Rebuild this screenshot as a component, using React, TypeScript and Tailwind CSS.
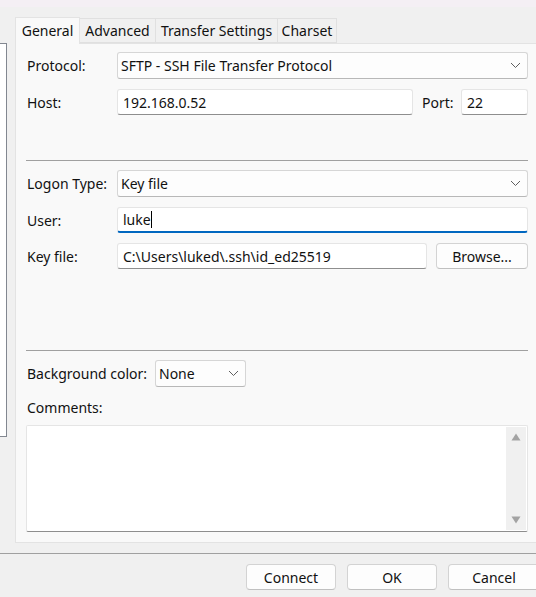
import React from "react";

const Chevron = () => (
  <svg width="11" height="7" viewBox="0 0 11 7" className="shrink-0">
    <path d="M1 1 L5.5 5.5 L10 1" fill="none" stroke="#5f5f5f" strokeWidth="1" />
  </svg>
);

const Select = ({ value, className }: { value: string; className: string }) => (
  <div
    className={`h-[27px] bg-[#fdfdfd] border border-[#d6d6d6] border-b-[#b8b8b8] rounded-[3px] flex items-center pl-[3px] pr-[6px] justify-between ${className}`}
  >
    <span>{value}</span>
    <Chevron />
  </div>
);

const Input = ({ value, className }: { value: string; className: string }) => (
  <div
    className={`h-[26px] bg-white border border-[#e5e5e5] border-b-[#8e8e8e] rounded-[3px] flex items-center pl-[5px] ${className}`}
  >
    <span>{value}</span>
  </div>
);

const Btn = ({ label, className }: { label: string; className: string }) => (
  <div
    className={`h-[26px] bg-[#fdfdfd] border border-[#d3d3d3] border-b-[#c0c0c0] rounded-[4px] flex items-center justify-center ${className}`}
  >
    {label}
  </div>
);

export default function App() {
  return (
    <div
      className="w-[536px] h-[597px] bg-[#f0f0f0] flex flex-col overflow-hidden text-[14px] text-[#111111]"
      style={{ fontFamily: '"Noto Sans", "Open Sans", sans-serif' }}
    >
      <div className="h-[7px] bg-[#f4eff4] shrink-0" />
      <div className="flex h-[546px] shrink-0">
        <div className="w-[7px] mt-[36px] h-[394px] bg-white border border-l-0 border-[#828790] shrink-0" />
        <div className="ml-[8px] mt-[9px] flex-1 flex flex-col min-w-0">
          <div className="flex items-end h-[27px] leading-none">
            <div className="w-[65px] h-[27px] bg-[#f9f9f9] border border-b-0 border-[#e3e3e3] flex items-center justify-center relative top-[1px] z-10">
              General
            </div>
            <div className="w-[76px] h-[25px] bg-[#f0f0f0] border border-l-0 border-[#e0e0e0] flex items-center justify-center">
              Advanced
            </div>
            <div className="w-[122px] h-[25px] bg-[#f0f0f0] border border-l-0 border-[#e0e0e0] flex items-center justify-center">
              Transfer Settings
            </div>
            <div className="w-[59px] h-[25px] bg-[#f0f0f0] border border-l-0 border-[#e0e0e0] flex items-center justify-center">
              Charset
            </div>
          </div>
          <div className="h-[500px] bg-[#f9f9f9] border border-r-0 border-[#e3e3e3] flex flex-col pl-[10px] pr-[8px]">
            {/* Protocol */}
            <div className="mt-[8px] flex items-center">
              <span className="w-[91px] pl-[1px]">Protocol:</span>
              <Select value="SFTP - SSH File Transfer Protocol" className="flex-1" />
            </div>
            {/* Host */}
            <div className="mt-[10px] flex items-center">
              <span className="w-[91px] pl-[1px]">Host:</span>
              <Input value="192.168.0.52" className="w-[296px]" />
              <span className="ml-[9px] w-[39px]">Port:</span>
              <Input value="22" className="flex-1" />
            </div>
            <div className="mt-[45px] h-px bg-[#a0a0a0]" />
            {/* Logon Type */}
            <div className="mt-[9px] flex items-center">
              <span className="w-[91px] pl-[1px]">Logon Type:</span>
              <Select value="Key file" className="flex-1" />
            </div>
            {/* User */}
            <div className="mt-[10px] flex items-center">
              <span className="w-[91px] pl-[1px]">User:</span>
              <div className="flex-1 h-[26px] bg-white border border-[#e5e5e5] border-b-2 border-b-[#0067c0] rounded-[3px] flex items-center pl-[5px]">
                <span>luke</span>
                <span className="w-px h-[17px] bg-black" />
              </div>
            </div>
            {/* Key file */}
            <div className="mt-[10px] flex items-center">
              <span className="w-[91px] pl-[1px]">Key file:</span>
              <Input value="C:\Users\luked\.ssh\id_ed25519" className="w-[310px]" />
              <Btn label="Browse..." className="ml-[9px] flex-1" />
            </div>
            <div className="mt-[81px] h-px bg-[#a0a0a0]" />
            {/* Background color */}
            <div className="mt-[9px] flex items-center">
              <span className="w-[129px] pl-[1px]">Background color:</span>
              <Select value="None" className="w-[91px]" />
            </div>
            <div className="mt-[10px] h-[20px] flex items-center pl-[1px]">Comments:</div>
            <div className="mt-[8px] h-[107px] bg-white border border-[#e5e5e5] border-b-[#8e8e8e] rounded-[2px] flex justify-end p-[1px]">
              <div className="w-[20px] bg-[#f0f0f0] flex flex-col items-center justify-between py-[6px]">
                <svg width="10" height="8" viewBox="0 0 10 8">
                  <path d="M5 0.5 L9.5 7.5 L0.5 7.5 Z" fill="#a3a3a3" />
                </svg>
                <svg width="10" height="8" viewBox="0 0 10 8">
                  <path d="M0.5 0.5 L9.5 0.5 L5 7.5 Z" fill="#a3a3a3" />
                </svg>
              </div>
            </div>
          </div>
        </div>
      </div>
      <div className="flex-1 border-t border-[#a0a0a0] flex justify-end items-start pt-[10px] gap-[11px] -mr-[4px]">
        <Btn label="Connect" className="w-[90px]" />
        <Btn label="OK" className="w-[90px]" />
        <Btn label="Cancel" className="w-[92px]" />
      </div>
    </div>
  );
}
